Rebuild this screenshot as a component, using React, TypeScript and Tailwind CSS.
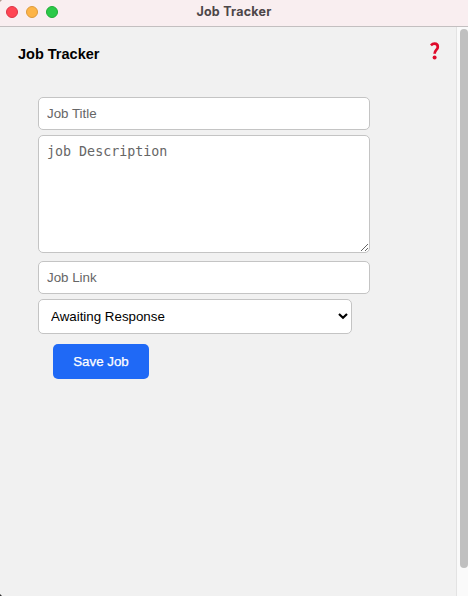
import React from "react";

const field =
  "block w-[332px] rounded-[5px] border border-[#c4c4c4] bg-white px-2 text-[13.33px] placeholder:text-[#666] placeholder:opacity-100 outline-none";

function TitleBar() {
  return (
    <header className="relative flex h-[27px] shrink-0 items-center border-b border-[#c3bfc0] bg-[#f9eef0] pb-[3px] pl-1.5">
      <div className="flex gap-2">
        <span className="size-3 rounded-full border border-[#dc3446] bg-[#ff4553]" />
        <span className="size-3 rounded-full border border-[#dd9a3c] bg-[#fdb447]" />
        <span className="size-3 rounded-full border border-[#20ac37] bg-[#2bc948]" />
      </div>
      <h1 className="absolute inset-x-0 top-1 text-center font-['Inter',sans-serif] text-[12.5px] leading-[16px] font-bold tracking-[0.25px] text-[#4c4648]">
        Job Tracker
      </h1>
    </header>
  );
}

function JobForm() {
  return (
    <form className="mt-[34px] ml-5 flex flex-col items-start">
      <input className={`${field} h-[33px]`} placeholder="Job Title" />
      <textarea
        className={`${field} mt-[5px] h-[118px] resize pt-2 font-['DejaVu_Sans_Mono',monospace] text-[13.33px] leading-4`}
        placeholder="job Description"
      />
      <input className={`${field} mt-2 h-[33px]`} placeholder="Job Link" />
      <div className="relative mt-[5px]">
        <select className="block h-[35px] w-[314px] appearance-none rounded-[5px] border border-[#c4c4c4] bg-white pl-3 text-[13.33px] text-black outline-none">
          <option>Awaiting Response</option>
        </select>
        <svg className="pointer-events-none absolute top-[13px] right-1 h-2 w-[10px]" viewBox="0 0 10 8" fill="none">
          <path d="M1 2 5 5.7 9 2" stroke="#000" strokeWidth="2.2" />
        </svg>
      </div>
      <button
        type="button"
        className="mt-2.5 ml-[15px] h-[35px] w-24 rounded-[5px] bg-[#1f69f6] text-[13.33px] text-white [-webkit-text-stroke:0.25px_white]"
      >
        Save Job
      </button>
    </form>
  );
}

export default function App() {
  return (
    <div className="relative flex h-[596px] w-[468px] flex-col overflow-hidden bg-[#f1f1f1] font-['Liberation_Sans',Arial,sans-serif]">
      <TitleBar />
      <div className="flex min-h-0 flex-1">
        <main className="flex-1 pt-[18px] pr-4 pl-[18px]">
          <div className="flex h-[18px] items-center justify-between">
            <h2 className="text-[14.5px] leading-[18px] font-bold text-black">Job Tracker</h2>
            <svg className="-mt-[7px] h-[18px] w-[10px]" viewBox="0 0 10 18" fill="none">
              <path
                d="M0.9 3.4C2 2.2 3.2 1.7 4.5 1.7C6.6 1.7 7.8 2.9 7.8 4.9C7.8 7.9 4.6 8.1 4.6 11.7"
                stroke="#df0b2b"
                strokeWidth="2.7"
              />
              <circle cx="4.6" cy="15.4" r="2" fill="#df0b2b" />
            </svg>
          </div>
          <JobForm />
        </main>
        <aside className="w-3 border-l border-[#e3e3e3] bg-[#fafafa] pt-0.5 pl-[3px]">
          <div className="h-[539px] w-2 rounded-full bg-[#c0c0c0]" />
        </aside>
      </div>
      <svg className="absolute top-0 left-0 size-0.5" viewBox="0 0 2 2">
        <path d="M0 0H2L0 2Z" fill="#b09a92" />
      </svg>
      <svg className="absolute bottom-0 left-0 size-0.5" viewBox="0 0 2 2">
        <path d="M0 0V2H2Z" fill="#333" />
      </svg>
    </div>
  );
}
